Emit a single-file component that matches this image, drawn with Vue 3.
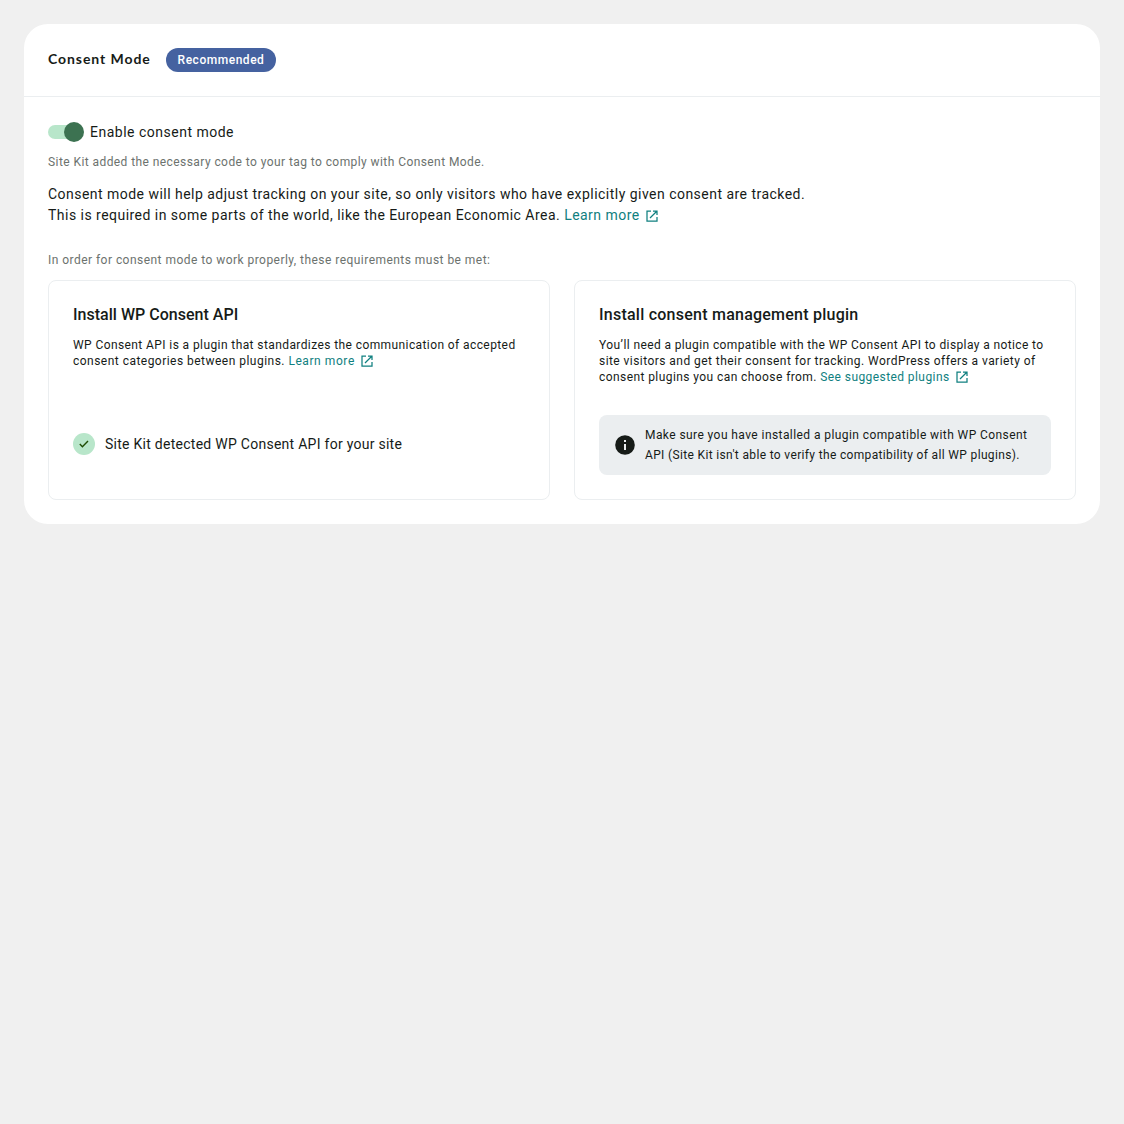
<script setup>
import { h } from 'vue'

const ExternalIcon = () =>
  h('svg', { class: 'external', width: 12, height: 12, viewBox: '0 0 12 12', fill: 'none', stroke: 'currentColor', 'stroke-width': 1.25 }, [
    h('path', { d: 'M5 1H1v10h10V7' }),
    h('path', { d: 'M7 1h4V5M10.8 1.2L4 8' }),
  ])
</script>

<template>
  <main class="page">
    <section class="panel">
      <header class="panel-header">
        <h3 class="title">Consent Mode</h3>
        <span class="badge"><span>Recommended</span></span>
      </header>
      <div class="content">
        <div class="switch-row">
          <span class="switch" role="switch" aria-checked="true"><span class="knob"></span></span>
          <span class="switch-label">Enable consent mode</span>
        </div>
        <p class="helper"><span>Site Kit added the necessary code to your tag to comply with Consent Mode.</span></p>
        <p class="description">
          <span class="line d1">Consent mode will help adjust tracking on your site, so only visitors who have explicitly given consent are tracked.</span>
          <span class="line d2">This is required in some parts of the world, like the European Economic Area. <a>Learn more<ExternalIcon /></a></span>
        </p>
        <p class="requirements"><span>In order for consent mode to work properly, these requirements must be met:</span></p>
        <div class="cards">
          <article class="card">
            <h4><span class="h1">Install WP Consent API</span></h4>
            <p class="card-text">
              <span class="line a1">WP Consent API is a plugin that standardizes the communication of accepted</span>
              <span class="line a2">consent categories between plugins. <a>Learn more<ExternalIcon /></a></span>
            </p>
            <div class="detected">
              <span class="check">
                <svg width="10" height="8" viewBox="0 0 10 8" fill="none" stroke="#1f4c04" stroke-width="1.4"><path d="M.8 4.1L3.4 6.7 9 1" /></svg>
              </span>
              <span class="detected-text">Site Kit detected WP Consent API for your site</span>
            </div>
          </article>
          <article class="card">
            <h4><span class="h2">Install consent management plugin</span></h4>
            <p class="card-text">
              <span class="line b1">You’ll need a plugin compatible with the WP Consent API to display a notice to</span>
              <span class="line b2">site visitors and get their consent for tracking. WordPress offers a variety of</span>
              <span class="line b3">consent plugins you can choose from. <a>See suggested plugins<ExternalIcon /></a></span>
            </p>
            <div class="notice">
              <svg width="20" height="20" viewBox="0 0 20 20"><circle cx="10" cy="10" r="9.8" fill="#161b18" /><path d="M9 5h2v2H9zM9 9h2v6H9z" fill="#ebeef0" /></svg>
              <p>
                <span class="line n1">Make sure you have installed a plugin compatible with WP Consent</span>
                <span class="line n2">API (Site Kit isn't able to verify the compatibility of all WP plugins).</span>
              </p>
            </div>
          </article>
        </div>
      </div>
    </section>
  </main>
</template>

<style>
body { background: #f0f0f0; }
</style>

<style scoped>
* { box-sizing: border-box; }
h3, h4, p { margin: 0; }
.page { padding: 24px; font-family: Roboto, "Liberation Sans", sans-serif; color: #161b18; }
.panel { height: 500px; border-radius: 24px; background: #fff; }
.panel-header { display: flex; align-items: center; gap: 16px; height: 73px; padding: 0 24px; border-bottom: 1px solid #ebeef0; }
.title { width: 102px; padding-bottom: 2px; white-space: nowrap; font-family: Lato, sans-serif; font-size: 14px; line-height: 20px; font-weight: 700; letter-spacing: .93px; }
.badge { display: flex; align-items: center; justify-content: center; width: 110px; height: 24px; border-radius: 12px; background: #4562a0; color: #fff; font-size: 12px; font-weight: 500; letter-spacing: .53px; }
.content { padding: 25px 24px 0; }
.switch-row { display: flex; align-items: center; gap: 6px; height: 20px; font-size: 14px; letter-spacing: .5px; }
.switch { display: flex; align-items: center; justify-content: flex-end; width: 36px; height: 14px; border-radius: 7px; background: linear-gradient(90deg, #b8e6ca 75%, transparent 75%); }
.knob { flex: none; width: 20px; height: 20px; border-radius: 50%; background: #3c7251; }
.helper, .requirements { font-size: 12px; line-height: 16px; color: #6c726e; letter-spacing: .425px; white-space: nowrap; }
.helper { margin-top: 12px; }
.requirements { margin-top: 26px; letter-spacing: .46px; }
.line { display: block; white-space: nowrap; }
.description { margin-top: 14px; font-size: 14px; line-height: 21px; letter-spacing: .472px; }
a { color: #108080; }
.external { margin-left: 6px; vertical-align: -2px; }
.cards { display: grid; grid-template-columns: 1fr 1fr; gap: 24px; margin-top: 12px; }
.card { height: 220px; padding: 24px; border: 1px solid #ebeef0; border-radius: 8px; }
h4 { font-size: 16px; line-height: 20px; font-weight: 500; white-space: nowrap; }
.h1 { letter-spacing: .02px; }
.h2 { letter-spacing: .24px; }
.card-text { height: 48px; margin-top: 12px; font-size: 12px; line-height: 16px; }
.a1 { letter-spacing: .407px; }
.a2 { letter-spacing: .475px; }
.a2 a { letter-spacing: .57px; }
.b1 { letter-spacing: .385px; }
.b2 { letter-spacing: .445px; }
.b3 { letter-spacing: .42px; }
.n1 { letter-spacing: .42px; }
.n2 { letter-spacing: .345px; }
.detected { display: flex; align-items: center; gap: 10px; height: 22px; margin-top: 48px; font-size: 14px; white-space: nowrap; letter-spacing: .267px; }
.check { display: flex; align-items: center; justify-content: center; width: 22px; height: 22px; border-radius: 50%; background: #b8e6ca; }
.notice { display: flex; align-items: center; gap: 10px; height: 60px; margin-top: 30px; padding: 0 16px; border-radius: 8px; background: #ebeef0; font-size: 12px; line-height: 20px; }
.notice svg { flex: none; }
</style>
